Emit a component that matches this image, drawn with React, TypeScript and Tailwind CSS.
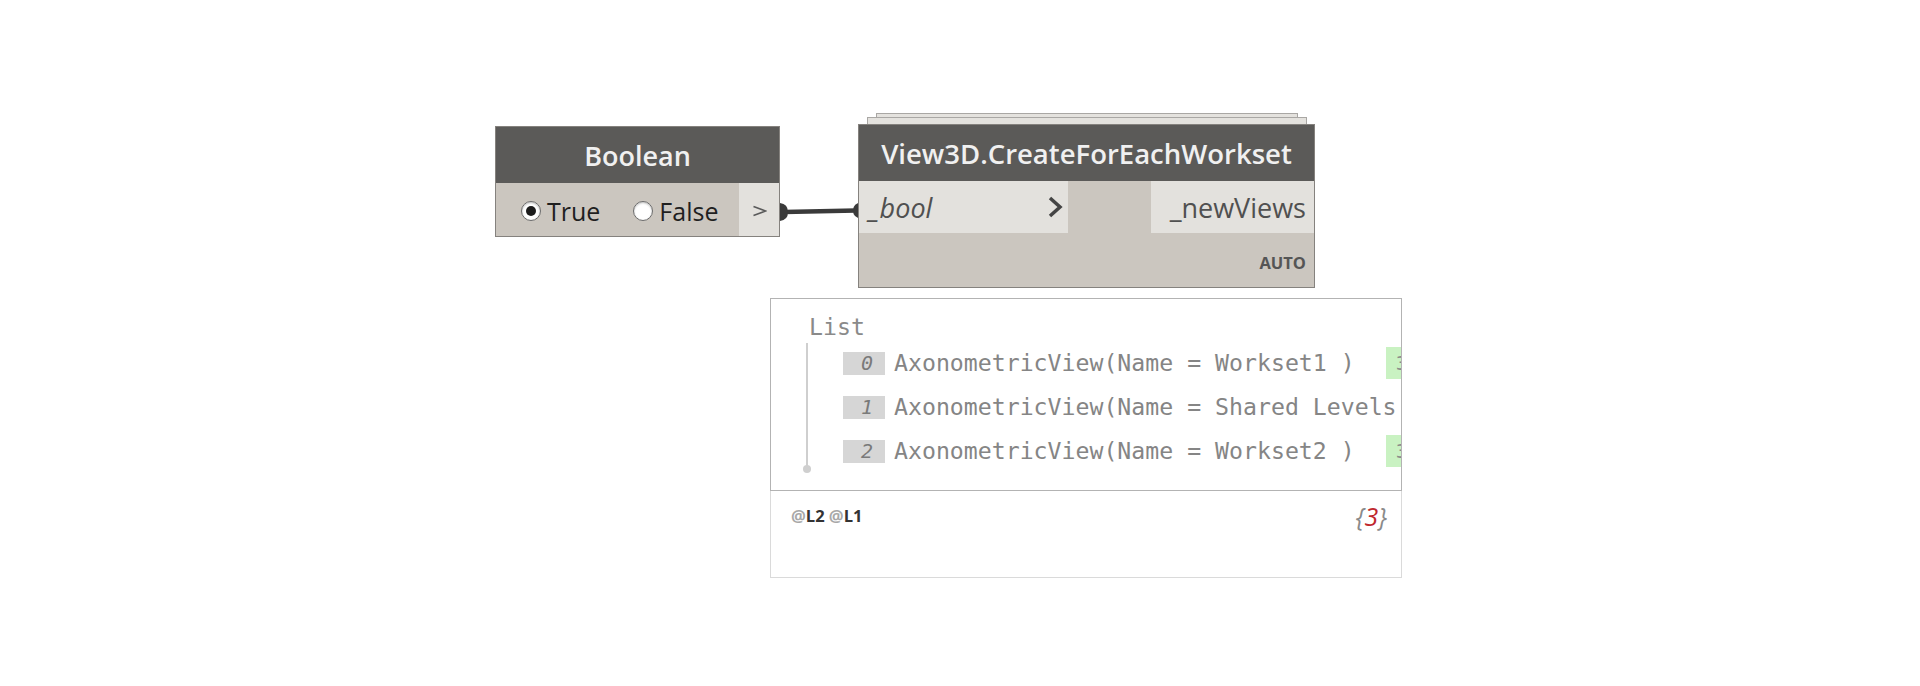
import React from "react";

const sans = { fontFamily: '"Open Sans", "Noto Sans", sans-serif' };
const mono = { fontFamily: '"DejaVu Sans Mono", "Liberation Mono", monospace' };

function Radio({ checked, label }: { checked: boolean; label: string }) {
  return (
    <div className="flex items-center gap-[6px]">
      <span className="flex h-[20px] w-[20px] items-center justify-center rounded-full border border-[#6b6b6b] bg-white shadow-[inset_0_1px_2px_rgba(0,0,0,0.25)]">
        {checked && <span className="h-[10px] w-[10px] rounded-full bg-[#1c1c1c]" />}
      </span>
      <span className="text-[25px] leading-none text-[#1f1f1f]">{label}</span>
    </div>
  );
}

function BooleanNode() {
  return (
    <div
      className="absolute left-[495px] top-[126px] w-[285px] border border-[#85827e]"
      style={sans}
    >
      <div className="flex h-[56px] items-center justify-center bg-[#5b5a58] pt-[2px] text-[27px] font-semibold text-[#f0f0f0]">
        Boolean
      </div>
      <div className="flex h-[53px] bg-[#cbc6bf]">
        <div className="flex flex-1 items-center gap-[33px] pl-[25px] pt-[3px]">
          <Radio checked label="True" />
          <Radio checked={false} label="False" />
        </div>
        <div className="flex w-[40px] items-center justify-center bg-[#e3e1dd] pt-[2px]">
          <svg width="15" height="12" viewBox="0 0 15 12">
            <polyline points="1.5,1.5 13.5,6 1.5,10.5" fill="none" stroke="#5a5a5a" strokeWidth="1.6" />
          </svg>
        </div>
      </div>
    </div>
  );
}

function Wire() {
  return (
    <svg className="absolute left-[776px] top-[198px]" width="90" height="28" viewBox="0 0 90 28">
      <line x1="8" y1="14" x2="80" y2="12.5" stroke="#3a3a3a" strokeWidth="4.5" />
      <path d="M4 5 Q12 6 12 14 Q12 22 4 23 Z" fill="#3a3a3a" />
      <path d="M86 4 Q77 5 77 12.5 Q77 20 86 21 Z" fill="#3a3a3a" />
    </svg>
  );
}

function View3DNode() {
  return (
    <>
      {/* stacked outlines behind the node mark list lacing */}
      <div className="absolute left-[876px] top-[113px] h-[40px] w-[422px] border border-[#a9a7a4] bg-[#e4e2de]" />
      <div className="absolute left-[867px] top-[117px] h-[40px] w-[440px] border border-[#a9a7a4] bg-[#e4e2de]" />
      <div
        className="absolute left-[858px] top-[124px] flex h-[164px] w-[457px] flex-col border border-[#85827e] bg-[#cbc6bf]"
        style={sans}
      >
        <div className="flex h-[56px] items-center justify-center bg-[#5b5a58] pt-[2px] text-[27.5px] font-semibold text-[#f0f0f0]">
          View3D.CreateForEachWorkset
        </div>
        <div className="flex h-[52px]">
          <div className="flex w-[209px] items-center justify-between bg-[#e3e1dd] pl-[10px] pr-[5px]">
            <span className="pt-[3px] text-[27px] italic text-[#505050]">_bool</span>
            <svg width="16" height="24" viewBox="0 0 16 24">
              <polyline points="3,3 13,12 3,21" fill="none" stroke="#444" strokeWidth="3.5" />
            </svg>
          </div>
          <div className="flex-1" />
          <div className="flex w-[163px] items-center justify-end bg-[#e3e1dd] pr-[8px]">
            <span className="pt-[3px] text-[27px] text-[#505050]">_newViews</span>
          </div>
        </div>
        <div className="flex flex-1 items-end justify-end pb-[16px] pr-[8px]">
          <span className="text-[16.5px] font-bold leading-none text-[#555]">AUTO</span>
        </div>
      </div>
    </>
  );
}

const rows = [
  { i: "0", text: "AxonometricView(Name = Workset1 )" },
  { i: "1", text: "AxonometricView(Name = Shared Levels and Grids )" },
  { i: "2", text: "AxonometricView(Name = Workset2 )" },
];

function Preview() {
  return (
    <div className="absolute left-[770px] top-[298px] w-[632px]">
      <div className="h-[193px] overflow-hidden border border-[#b3b3b3] bg-white pl-[38px] pt-[14px]" style={mono}>
        <div className="text-[23.2px] leading-[28px] text-[#8a8a8a]">List</div>
        <div className="flex">
          <div className="ml-[-6px] mt-[2px] flex w-[8px] flex-col items-center">
            <div className="h-[124px] w-[2px] bg-[#cfcfcf]" />
            <div className="mt-[-2px] h-[8px] w-[8px] rounded-full bg-[#cfcfcf]" />
          </div>
          <div className="ml-[32px] flex flex-col">
            {rows.map((r) => (
              <div key={r.i} className="flex h-[44px] items-center whitespace-nowrap">
                <span className="flex h-[23px] w-[42px] items-center justify-end bg-[#d6d6d6] pr-[12px] text-[20px] italic text-[#7a7a7a]">
                  {r.i}
                </span>
                <span className="ml-[9px] text-[23.2px] text-[#858585]">{r.text}</span>
                <span className="ml-[31px] flex h-[32px] items-center bg-[#c9f2c2] pl-[10px] text-[20px] text-[#8a8a8a]">
                  3D View
                </span>
              </div>
            ))}
          </div>
        </div>
      </div>
      <div className="flex h-[87px] items-start justify-between border-x border-b border-[#dadada] bg-white pl-[20px] pr-[14px] pt-[11px]" style={sans}>
        <span className="text-[16.5px] font-bold leading-[28px]">
          <span className="text-[#a8a8a8]">@</span>
          <span className="text-[#333]">L2 </span>
          <span className="text-[#a8a8a8]">@</span>
          <span className="text-[#333]">L1</span>
        </span>
        <span className="text-[25px] italic leading-[28px]">
          <span className="text-[#8a8a8a]">{"{"}</span>
          <span className="text-[#c0272d]">3</span>
          <span className="text-[#8a8a8a]">{"}"}</span>
        </span>
      </div>
    </div>
  );
}

export default function App() {
  return (
    <div className="relative h-[686px] w-[1920px] overflow-hidden bg-white">
      <BooleanNode />
      <Wire />
      <View3DNode />
      <Preview />
    </div>
  );
}
